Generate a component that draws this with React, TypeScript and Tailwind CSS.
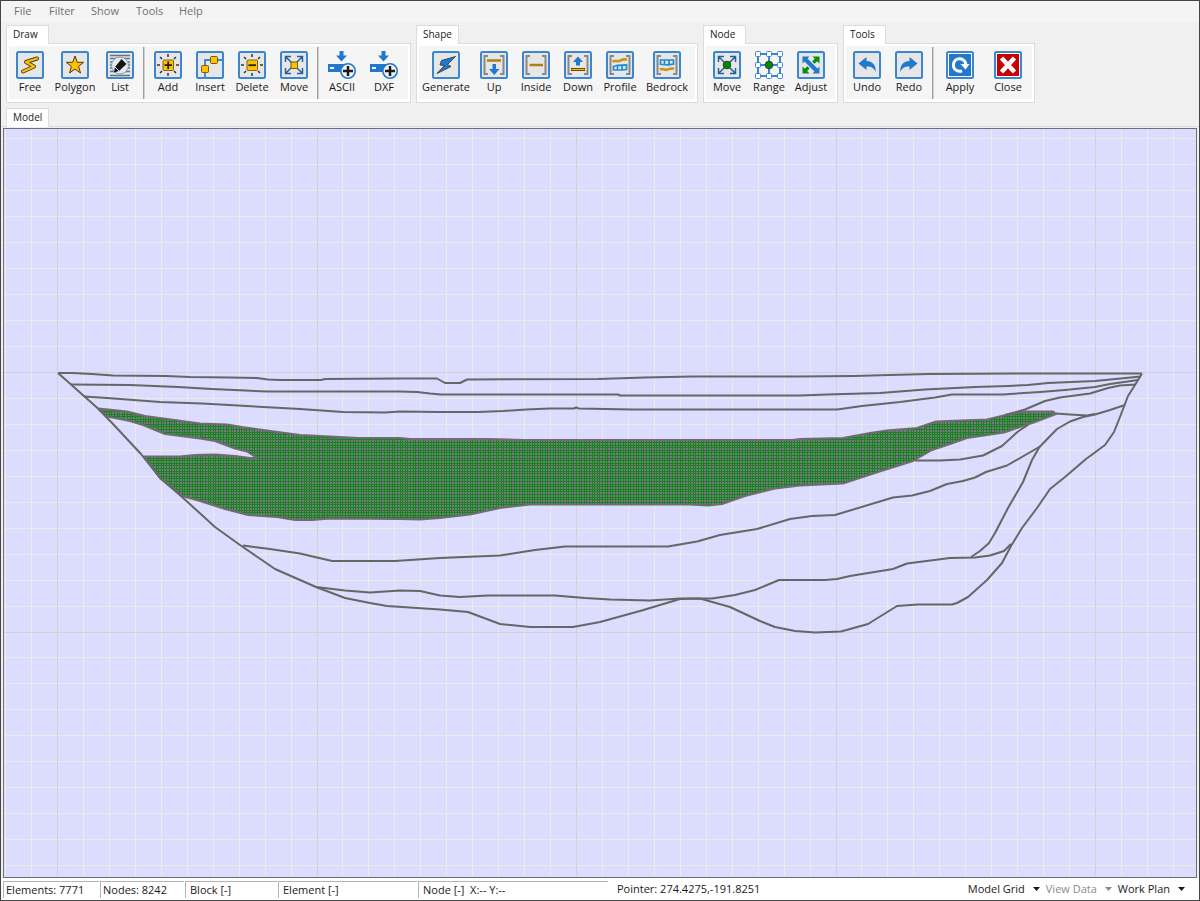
import { PointerEvent, ReactNode, useState } from "react";

const GRID = 25.95;
const ORIGIN = { x: 57.5, y: 372.5 };

// section boundaries and layer interfaces
const layers = [
  "58,373 72,373 92,374 113,375.5 165,376 190,377 230,377.5 257,378 268,379.5 280,380 321,380 325,379 400,378.5 437,378.5 445,383 460,383 467,379.5 598,379 645,377.5 692,376.5 800,376.5 854,376 890,375 928,374 1018,373.5 1142,373.5",
  "71,384.5 130,385 178,387 212,389 245,390.5 268,391.5 400,391.5 417,392 430,393.5 441,394.5 618,394.5 620,395.5 800,395.5 827,394.5 880,393 925,389.5 975,387 1008,386 1028,385 1048,383 1095,381 1141,376.5",
  "84,396.5 107,398 160,402 202,403.5 247,406 300,409 343,412 385,412.5 400,411.5 439,412 478,412 503,411 526,409.5 550,408.5 574,408.5 576,407.5 579,408.5 632,409.5 837,409.5 862,406 900,402 935,397.5 952,394.5 1003,394.5 1040,392 1065,390 1095,387 1110,384 1138,380",
  "1005,415 1025,409.5 1045,401 1060,397.5 1090,393.5 1108,388 1120,385.5 1136,384.5",
  "58,373 71,384.5 98,408.5 113,424 141,454 160,478 181,496 215,527 240,545 275,569 316,587 345,598 370,603 387,606 440,609.5 468,612 500,624 530,627 573,627 600,622 640,611 680,599 700,598.5 730,607 760,621 775,627 795,631 815,632.5 841,631.5 868,624 897,606 918,604.5 952,604.5 957,603 968,597 987,580 1002,563 1011,546 1022,528 1037,508 1050,489 1065,477 1086,459 1105,445 1114,432 1120,417 1128,396 1135,385 1142,373.5",
  "243,545.5 270,549 300,553.5 332,561 395,561 440,558 500,555.5 535,550 565,546.5 668,546.5 697,541.5 720,535 757,529 790,519 812,516 835,515 893,497.5 912,495.5 930,491 947,484 963,481 975,477.5 986,472 1007,465.5 1040,446.5 1057,429 1070,421.5 1083,417 1095,414.5 1110,410 1125,405",
  "1040,446 1032,460 1023,482 1008,508 995,533 989,543 980,551 971,557",
  "316,587 345,590.5 370,592.5 400,590.5 420,591 440,595.5 460,597 488,595.5 555,595.5 585,598 610,599.5 650,600.5 680,598.5 712,598.5 735,595 755,590 779,580 825,580 837,579 850,576 893,569 907,563.5 950,558 975,557.5 990,555.5 1004,551 1011,544",
  "1056,413.5 1070,414.5 1087,415.5 1095,414",
  "915,460.5 940,460.5 960,459.5 983,455.5 1002,446 1018,431.5 1028,425",
];

const meshOutline =
  "98,408.5 113,410 127,411.5 145,416 167,419 200,423.5 227,424.5 242,427 300,435 340,437 358,438 400,438 410,439 487,439 524,440 792,440 800,439 843,438 870,433 887,430.5 917,428 936,421.5 987,419.5 1010,414 1025,411.5 1053,411.5 1056,414 1035,422 1004,432.5 967,438 950,444 932,450 913,461 878,472 843,483.5 800,485.5 775,488.5 745,496 722,504 708,505.5 690,504.5 645,504.5 583,504.5 530,504.5 500,508 470,514.5 440,518 420,519.5 400,519 330,518.5 312,520 295,520 277,517 248,515 225,509 200,501 182,496 160,478 144,456.5 180,456.5 195,455 215,454.5 235,456 250,458 257,458 247,451.5 235,448.5 215,441 200,438.5 165,434 143,425 130,421 107,416.5";

function gridPath(from: number, to: number, origin: number, step: number, line: (p: number) => string, skip?: (k: number) => boolean) {
  let d = "";
  for (let k = Math.ceil((from - origin) / step); origin + k * step < to; k++) {
    if (skip?.(k)) continue;
    d += line(Math.floor(origin + k * step) + 0.5);
  }
  return d;
}

const vline = (p: number) => `M${p} 129V877`;
const hline = (p: number) => `M4 ${p}H1196`;
const isMajor = (k: number) => k % 10 === 0;
const minorGrid =
  gridPath(4, 1196, ORIGIN.x, GRID, vline, isMajor) +
  gridPath(129, 877, ORIGIN.y, GRID, hline, isMajor);
const majorGrid =
  gridPath(4, 1196, ORIGIN.x, GRID * 10, vline) +
  gridPath(129, 877, ORIGIN.y, GRID * 10, hline);
const meshGrid =
  gridPath(96, 1060, ORIGIN.x, GRID / 10, (p) => `M${p} 400V525`) +
  gridPath(405, 523, ORIGIN.y, GRID / 10, (p) => `M96 ${p}H1060`);

function ModelView() {
  return (
    <svg
      viewBox="4 129 1192 748"
      preserveAspectRatio="xMidYMid slice"
      className="block h-full w-full"
      role="img"
      aria-label="Model"
    >
      <defs>
        <clipPath id="mesh">
          <polygon points={meshOutline} />
        </clipPath>
      </defs>
      <path d={minorGrid} stroke="#ebebea" shapeRendering="crispEdges" />
      <path d={majorGrid} stroke="#d2d2d6" shapeRendering="crispEdges" />
      <polygon points={meshOutline} fill="#86728f" />
      <path
        d={meshGrid}
        stroke="#12881a"
        shapeRendering="crispEdges"
        clipPath="url(#mesh)"
      />
      <g fill="none" stroke="#666666" strokeWidth="2" strokeLinejoin="round">
        <polygon points={meshOutline} stroke="#706c72" />
        {layers.map((points) => (
          <polyline key={points} points={points} />
        ))}
      </g>
    </svg>
  );
}

const BLUE = "#2178cc";
const GOLD = "#ffc000";

function Frame({ children }: { children: ReactNode }) {
  return (
    <>
      <rect x="1" y="1" width="26" height="26" rx="1.5" fill="#e6e6e6" stroke="#3a86cf" strokeWidth="2" />
      {children}
    </>
  );
}

const rays = (
  <path
    d="M14 3v3M14 22v3M3 14h3M22 14h3M6 6l2 2M20 20l2 2M22 6l-2 2M8 20l-2 2"
    stroke="#333"
    strokeWidth="1.5"
  />
);

const goldBox = (
  <rect x="9" y="9" width="10.5" height="10.5" rx="1" fill={GOLD} stroke="#7a6420" />
);

const brackets = (
  <path d="M8 5H4.500v18H8M20 5h3.500v18H20" fill="none" stroke="#888" strokeWidth="2" />
);

const diagonals = (
  <path
    d="M6 6l16 16M22 6L6 22M5.500 11V5.500H11M17 5.500h5.500V11M5.500 17v5.500H11M22.500 17v5.500H17"
    fill="none"
    stroke="#2c5f96"
    strokeWidth="1.5"
  />
);

const importIcon = (
  <>
    <path d="M11.500 0h4v4.500h3.500l-5.500 6-5.500-6h3.500z" fill={BLUE} />
    <rect x="0" y="13" width="18" height="8" fill={BLUE} />
    <rect x="2" y="16" width="4" height="2" fill="#fff" />
    <circle cx="20" cy="20" r="7.2" fill="#f4f4f4" stroke={BLUE} strokeWidth="1.6" />
    <path d="M20 15v10M15 20h10" stroke="#1a1a1a" strokeWidth="2.5" />
  </>
);

const icons: Record<string, ReactNode> = {
  free: (
    <Frame>
      <path d="M21 7.500l-11 3.500 8 4.500-11 5" fill="none" stroke="#4a3e12" strokeWidth="4" strokeLinecap="round" strokeLinejoin="round" />
      <path d="M21 7.500l-11 3.500 8 4.500-11 5" fill="none" stroke={GOLD} strokeWidth="2.2" strokeLinecap="round" strokeLinejoin="round" />
    </Frame>
  ),
  polygon: (
    <Frame>
      <path d="M14 5l2.300 6.300h6.400l-5.100 4.100 1.900 6.600-5.500-3.900L8.500 22l1.900-6.600-5.100-4.100h6.400z" fill={GOLD} stroke="#4a3e12" />
    </Frame>
  ),
  list: (
    <Frame>
      <path d="M4 4.500h20M4 7.500h20M4 11h4M20 11h4M4 14h3M21 14h3M4 17h3M21 17h3M4 20.500h20M4 24.500h20" stroke="#707070" strokeWidth="1.3" />
      <circle cx="14" cy="14.500" r="8.500" fill="#e8e8e8" stroke="#67a3da" />
      <path d="M15.500 8l5 5-7.500 7-5 1.500 1-5.500z" fill="#151515" />
      <path d="M8.800 15.800l4.400 4.400" stroke="#e8e8e8" />
    </Frame>
  ),
  add: (
    <Frame>
      {rays}
      {goldBox}
      <path d="M14.200 10.500V18M10.500 14.200H18" stroke="#222" strokeWidth="1.800" />
    </Frame>
  ),
  insert: (
    <Frame>
      <path d="M9 27V9h18" fill="none" stroke="#3a86cf" strokeWidth="1.8" />
      <rect x="5.5" y="14.5" width="7" height="7" rx="1" fill={GOLD} stroke="#735d18" />
      <rect x="14.5" y="5.5" width="7" height="7" rx="1" fill={GOLD} stroke="#735d18" />
    </Frame>
  ),
  delete: (
    <Frame>
      {rays}
      {goldBox}
      <path d="M10.500 14.200H18" stroke="#222" strokeWidth="1.8" />
    </Frame>
  ),
  move: (
    <Frame>
      {diagonals}
      <rect x="11" y="11" width="6.5" height="6.5" fill={GOLD} stroke="#735d18" />
    </Frame>
  ),
  import: importIcon,
  generate: (
    <Frame>
      <path d="M23.500 5.500L9.500 9.500l-1.500 4.500 4.500.5L5 22.500l14-7-3.500-2z" fill={BLUE} stroke="#39464f" strokeLinejoin="round" />
    </Frame>
  ),
  up: (
    <Frame>
      {brackets}
      <path d="M7 9.500h14" stroke="#a98212" strokeWidth="2.5" />
      <path d="M12.500 13H16v5h3.500L14.300 24 9 18h3.500z" fill={BLUE} />
    </Frame>
  ),
  inside: (
    <Frame>
      {brackets}
      <path d="M7.500 14H21" stroke="#a98212" strokeWidth="2.5" />
    </Frame>
  ),
  down: (
    <Frame>
      {brackets}
      <path d="M14 5.500l5 5.500h-3v3.500h-4V11H9z" fill={BLUE} />
      <path d="M7 18.500h14" stroke="#3c310d" strokeWidth="3" />
      <path d="M7.500 18.500h13" stroke={GOLD} strokeWidth="1.4" />
    </Frame>
  ),
  profile: (
    <Frame>
      {brackets}
      <path d="M6.500 10.500c3-1.500 5 .5 7.500-.8s4-1.700 7-1.200" fill="none" stroke="#c4971a" strokeWidth="2.6" />
      <path d="M7.500 15.500l4-1.200 9-.3v4.500l-5 .5h-8zM11.500 14v5M16 14v5" fill="none" stroke="#1c8bd8" strokeWidth="1.7" />
    </Frame>
  ),
  bedrock: (
    <Frame>
      {brackets}
      <path d="M7.500 9h13v4l-5 .8-8-.5zM11.500 9v5M16 9v5" fill="none" stroke="#1c8bd8" strokeWidth="1.7" />
      <path d="M7 18.500c3-1.500 5 1 7.500 0s3.500-1.500 6.500-.8" fill="none" stroke="#c4971a" strokeWidth="2.6" />
    </Frame>
  ),
  nodeMove: (
    <Frame>
      {diagonals}
      <circle cx="14" cy="14" r="3.8" fill="#008a00" stroke="#254525" />
    </Frame>
  ),
  range: (
    <>
      <path d="M3 3h22v22H3zM14 3v22M3 14h22" fill="none" stroke="#3a86cf" strokeWidth="2" />
      <g fill="#fff" stroke="#3a86cf">
        {[3, 14, 25].map((y) =>
          [3, 14, 25].map((x) => (
            <rect key={`${x},${y}`} x={x - 2.5} y={y - 2.5} width="5" height="5" rx="1" />
          ))
        )}
      </g>
      <circle cx="14" cy="14" r="3.8" fill="#008a00" stroke="#254525" />
    </>
  ),
  adjust: (
    <Frame>
      <path d="M5.500 5.500h7l-2 2 10 10 2-2v7h-7l2-2-10-10-2 2z" fill={BLUE} />
      <path d="M15.500 5.500h7v7l-2.300-2.300-2.700 2.600-2.300-2.300 2.600-2.700zM12.500 22.500h-7v-7l2.300 2.300 2.500-2.500 2.300 2.300-2.500 2.500z" fill="#068f0c" />
    </Frame>
  ),
  undo: (
    <Frame>
      <path d="M5.500 12.500l8-6.500v4c6 .3 9.500 4 9.300 11-1.500-3.500-4-5.500-9.300-5.500V19z" fill={BLUE} />
    </Frame>
  ),
  redo: (
    <Frame>
      <path d="M22.500 12.500l-8-6.500v4c-6 .3-9.500 4-9.300 11 1.500-3.500 4-5.500 9.300-5.500V19z" fill={BLUE} />
    </Frame>
  ),
  apply: (
    <>
      <rect x="1" y="1" width="26" height="26" rx="1.5" fill="#fff" stroke="#3a86cf" strokeWidth="2" />
      <rect x="3" y="3" width="22" height="22" fill={BLUE} />
      <path d="M19.800 13A6.300 6.300 0 1 0 16 19.800" fill="none" stroke="#fff" strokeWidth="3" />
      <path d="M14.500 13h9l-4 5.500z" fill="#fff" />
    </>
  ),
  close: (
    <>
      <rect x="1" y="1" width="26" height="26" rx="1.5" fill="#fff" stroke="#3a86cf" strokeWidth="2" />
      <rect x="3" y="3" width="22" height="22" fill="#cb0000" />
      <path d="M7.500 7l13 14M20.500 7l-13 14" stroke="#fff" strokeWidth="4.5" />
    </>
  ),
};

type Tool = { label: string; icon: string; width?: string };
type Group = { title: string; sections: Tool[][]; end?: string };

const groups: Group[] = [
  {
    title: "Draw",
    end: "pr-[3px]",
    sections: [
      [
        { label: "Free", icon: "free" },
        { label: "Polygon", icon: "polygon", width: "w-12" },
        { label: "List", icon: "list" },
      ],
      [
        { label: "Add", icon: "add" },
        { label: "Insert", icon: "insert" },
        { label: "Delete", icon: "delete" },
        { label: "Move", icon: "move" },
      ],
      [
        { label: "ASCII", icon: "import" },
        { label: "DXF", icon: "import" },
      ],
    ],
  },
  {
    title: "Shape",
    end: "pr-0.5",
    sections: [
      [
        { label: "Generate", icon: "generate", width: "w-[54px]" },
        { label: "Up", icon: "up" },
        { label: "Inside", icon: "inside" },
        { label: "Down", icon: "down" },
        { label: "Profile", icon: "profile" },
        { label: "Bedrock", icon: "bedrock", width: "w-[52px]" },
      ],
    ],
  },
  {
    title: "Node",
    end: "pr-[3px]",
    sections: [
      [
        { label: "Move", icon: "nodeMove" },
        { label: "Range", icon: "range" },
        { label: "Adjust", icon: "adjust" },
      ],
    ],
  },
  {
    title: "Tools",
    sections: [
      [
        { label: "Undo", icon: "undo" },
        { label: "Redo", icon: "redo" },
      ],
      [
        { label: "Apply", icon: "apply", width: "w-12" },
        { label: "Close", icon: "close", width: "w-12" },
      ],
    ],
  },
];

function Tab({ title }: { title: string }) {
  return (
    <h2 className="relative z-10 -mb-px flex h-[19px] w-[43px] items-center border border-b-0 border-[#dcdcdc] bg-white pb-0.5 pl-1.5 text-[10px]">
      {title}
    </h2>
  );
}

function ToolGroup({ group }: { group: Group }) {
  return (
    <section>
      <Tab title={group.title} />
      <div className="border border-[#dcdcdc] bg-white px-0.5 pt-0.5 pb-[3px]">
        <div className={`flex h-[53px] bg-[#f5f5f5] ${group.end ?? ""}`}>
          {group.sections.map((tools, i) => (
            <div key={i} className="flex">
              {i > 0 && (
                <span className="mx-0.5 mt-px w-0.5 border-l border-[#a0a0a0] bg-[#d0d0d0]" />
              )}
              {tools.map((tool) => (
                <button
                  key={tool.label}
                  type="button"
                  className={`flex flex-col items-center pt-[5px] whitespace-nowrap ${tool.width ?? "w-[42px]"}`}
                >
                  <svg viewBox="0 0 28 28" className="size-7 shrink-0" aria-hidden="true">
                    {icons[tool.icon]}
                  </svg>
                  <span className="leading-4">{tool.label}</span>
                </button>
              ))}
            </div>
          ))}
        </div>
      </div>
    </section>
  );
}

const menus = [
  { label: "File", width: "w-[35px]" },
  { label: "Filter", width: "w-[42px]" },
  { label: "Show", width: "w-[45px]" },
  { label: "Tools", width: "w-[43px]" },
  { label: "Help", width: "w-[43px]" },
];

const fields = [
  { text: "Elements: 7771", width: "w-24", pad: "pl-0.5" },
  { text: "Nodes: 8242", width: "w-[84px]", pad: "pl-0.5" },
  { text: "Block [-]", width: "w-[92px]", pad: "pl-1" },
  { text: "Element [-]", width: "w-[139px]", pad: "pl-1" },
  { text: "Node [-]  X:-- Y:--", width: "w-[190px]", pad: "pl-1" },
];

function StatusMenu({ label, disabled }: { label: string; disabled?: boolean }) {
  return (
    <button
      type="button"
      disabled={disabled}
      aria-haspopup="menu"
      className="flex items-center gap-2 disabled:text-[#8a8a8a]"
    >
      {label}
      <svg viewBox="0 0 7 4" className="h-1 w-[7px]" aria-hidden="true">
        <path d="M0 0h7L3.500 4z" fill="currentColor" />
      </svg>
    </button>
  );
}

export default function App() {
  const [pointer, setPointer] = useState("274.4275,-191.8251");

  const onPointerMove = (e: PointerEvent<HTMLElement>) => {
    const box = e.currentTarget.getBoundingClientRect();
    const x = e.clientX - box.left - 54;
    const y = box.top + 244 - e.clientY;
    setPointer(`${x.toFixed(4)},${y.toFixed(4)}`);
  };

  return (
    <div className="flex h-screen flex-col border border-[#454545] bg-[#f0f0f0] font-['Open_Sans','Noto_Sans',sans-serif] text-[11px] text-[#1a1a1a]">
      <nav className="flex h-[21px] bg-[#f4f4f4] pl-[13px] text-[#707070]">
        {menus.map((menu) => (
          <button key={menu.label} type="button" className={`text-left ${menu.width}`}>
            {menu.label}
          </button>
        ))}
      </nav>
      <header className="flex gap-[5px] pt-[3px] pl-[5px]">
        {groups.map((group) => (
          <ToolGroup key={group.title} group={group} />
        ))}
      </header>
      <div className="mt-[5px] border-b border-[#dcdcdc] pl-[5px]">
        <Tab title="Model" />
      </div>
      <main
        onPointerMove={onPointerMove}
        className="mx-0.5 mt-px min-h-0 flex-1 border border-[#6e6e78] bg-[#dcdcff]"
      >
        <ModelView />
      </main>
      <footer className="flex h-[22px] items-center bg-white pl-0.5">
        {fields.map((field) => (
          <div
            key={field.text}
            className={`mr-px h-[17px] border-t border-l border-[#b4b4b4] leading-4 whitespace-pre ${field.width} ${field.pad}`}
          >
            {field.text}
          </div>
        ))}
        <div className="pl-2">Pointer: {pointer}</div>
        <div className="ml-auto flex gap-1.5 pr-3.5">
          <StatusMenu label="Model Grid" />
          <StatusMenu label="View Data" disabled />
          <StatusMenu label="Work Plan" />
        </div>
      </footer>
    </div>
  );
}
